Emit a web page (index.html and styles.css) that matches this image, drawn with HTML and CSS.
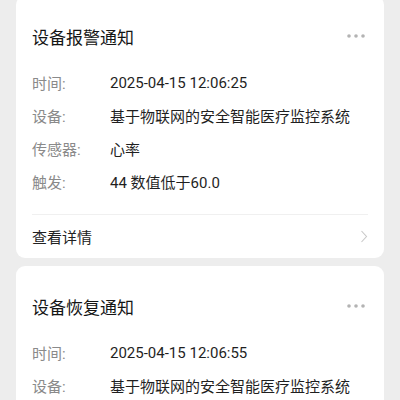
FILE: index.html
```html
<!DOCTYPE html>
<html lang="zh-CN">
<head>
<meta charset="utf-8">
<link rel="stylesheet" href="styles.css">
</head>
<body>
<div class="list">
  <div class="card">
    <div class="card-head">
      <span class="title">设备报警通知</span>
      <svg class="more" width="22" height="8" viewBox="0 0 22 8"><circle cx="4" cy="4" r="1.8"/><circle cx="11" cy="4" r="1.8"/><circle cx="18" cy="4" r="1.8"/></svg>
    </div>
    <div class="details">
      <div class="row"><span class="label">时间:</span><span class="value">2025-04-15 12:06:25</span></div>
      <div class="row"><span class="label">设备:</span><span class="value">基于物联网的安全智能医疗监控系统</span></div>
      <div class="row"><span class="label">传感器:</span><span class="value">心率</span></div>
      <div class="row"><span class="label">触发:</span><span class="value">44 数值低于60.0</span></div>
    </div>
    <div class="card-foot">
      <span class="link">查看详情</span>
      <svg class="chev" width="8" height="13" viewBox="0 0 8 13"><path d="M1.5 1 L6.5 6.5 L1.5 12" fill="none" stroke="#c8c8c8" stroke-width="1.1"/></svg>
    </div>
  </div>
  <div class="card card-partial">
    <div class="card-head">
      <span class="title">设备恢复通知</span>
      <svg class="more" width="22" height="8" viewBox="0 0 22 8"><circle cx="4" cy="4" r="1.8"/><circle cx="11" cy="4" r="1.8"/><circle cx="18" cy="4" r="1.8"/></svg>
    </div>
    <div class="details details-partial">
      <div class="row"><span class="label">时间:</span><span class="value">2025-04-15 12:06:55</span></div>
      <div class="row"><span class="label">设备:</span><span class="value">基于物联网的安全智能医疗监控系统</span></div>
    </div>
  </div>
</div>
</body>
</html>
```
FILE: styles.css
```css
html, body {
  margin: 0;
  padding: 0;
  background: #ededed;
  font-family: "Roboto", "Noto Sans CJK SC", sans-serif;
  overflow: hidden;
  height: 400px;
}
.list {
  display: flex;
  flex-direction: column;
  gap: 8px;
  padding: 0 16px;
  margin-top: -4px;
}
.card {
  background: #ffffff;
  border-radius: 9px;
  padding: 0 16px;
}
.card-partial {
  border-bottom-left-radius: 0;
  border-bottom-right-radius: 0;
}
.card-head {
  display: flex;
  align-items: center;
  justify-content: space-between;
  padding-top: 30px;
  height: 24px;
}
.title {
  font-size: 17px;
  line-height: 24px;
  color: #141414;
  font-weight: 400;
}
.more {
  fill: #b3b3b3;
  margin-right: 1px;
  margin-top: -4px;
}
.details {
  padding: 16px 0;
  border-bottom: 1px solid #f0f0f0;
}
.details-partial {
  padding-bottom: 0;
  border-bottom: none;
}
.row {
  display: flex;
  height: 33px;
  align-items: center;
  font-size: 15px;
}
.label {
  width: 78px;
  color: #8a8a8a;
}
.value {
  color: #1f1f1f;
}
.card-foot {
  display: flex;
  align-items: center;
  justify-content: space-between;
  height: 43px;
}
.link {
  font-size: 15px;
  color: #222;
}
```
